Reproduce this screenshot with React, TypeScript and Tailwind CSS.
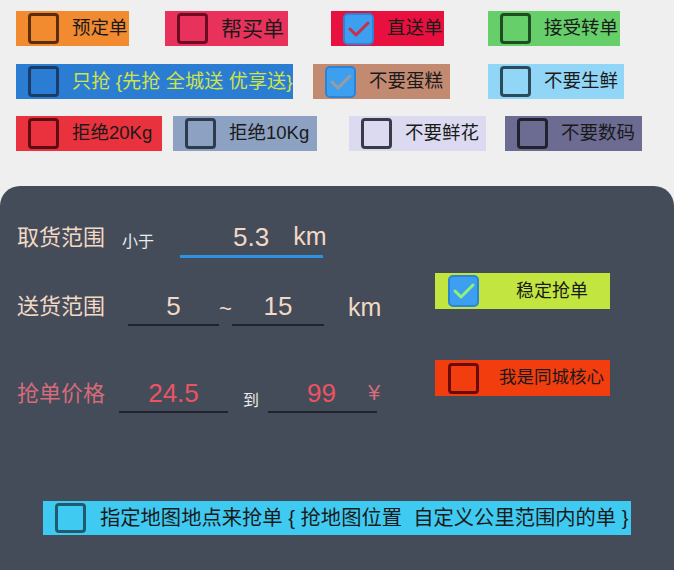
import React from "react";

const FONT = { fontFamily: '"Liberation Sans", "Noto Sans CJK SC", sans-serif' };

function Box({ cls }: { cls: string }) {
  return <div className={`w-[31px] h-[31px] shrink-0 rounded-[4px] border-[3.5px] ${cls}`} />;
}

function Checked({ stroke }: { stroke: string }) {
  return (
    <div className="w-[31px] h-[32px] shrink-0 rounded-[5px] border-2 border-[#2b84d4] bg-[#3c9ff0] flex items-center justify-center">
      <svg width="24" height="24" viewBox="0 0 24 24">
        <polyline points="3,12 9,18 21,6" fill="none" stroke={stroke} strokeWidth="3" strokeLinecap="round" strokeLinejoin="round" />
      </svg>
    </div>
  );
}

type Item = {
  label: string;
  bg: string;
  ml: string;
  w: string;
  box?: string;
  check?: string;
  text?: string;
};

function Tag({ it }: { it: Item }) {
  return (
    <div className={`h-[35px] flex items-center pl-[12px] shrink-0 ${it.bg} ${it.ml} ${it.w}`}>
      {it.check ? <Checked stroke={it.check} /> : <Box cls={it.box || ""} />}
      <span className={`ml-[13px] whitespace-nowrap leading-none ${it.text || "text-[18.5px] text-[#1a1a1a]"}`}>{it.label}</span>
    </div>
  );
}

const row1: Item[] = [
  { label: "预定单", bg: "bg-[#f28a30]", ml: "ml-[16px]", w: "w-[113px]", box: "border-[#5b2d0c]" },
  { label: "帮买单", bg: "bg-[#e8325c]", ml: "ml-[36px]", w: "w-[123px]", box: "border-[#6b0c23]", text: "text-[21px] text-[#1a1a1a]" },
  { label: "直送单", bg: "bg-[#e8103e]", ml: "ml-[43px]", w: "w-[113px]", check: "#c8304a" },
  { label: "接受转单", bg: "bg-[#66cf6a]", ml: "ml-[44px]", w: "w-[132px]", box: "border-[#1e4d22]" },
];
const row2: Item[] = [
  { label: "只抢 {先抢 全城送 优享送}", bg: "bg-[#2b7dd4]", ml: "ml-[16px]", w: "w-[277px]", box: "border-[#1b3c66]", text: "text-[19.2px] text-[#cde34a]" },
  { label: "不要蛋糕", bg: "bg-[#c38a72]", ml: "ml-[20px]", w: "w-[137px]", check: "#9c9c9c" },
  { label: "不要生鲜", bg: "bg-[#92d6f7]", ml: "ml-[38px]", w: "w-[136px]", box: "border-[#2a4b5c]" },
];
const row3: Item[] = [
  { label: "拒绝20Kg", bg: "bg-[#ea323e]", ml: "ml-[16px]", w: "w-[146px]", box: "border-[#5e0b12]" },
  { label: "拒绝10Kg", bg: "bg-[#8da2c2]", ml: "ml-[11px]", w: "w-[144px]", box: "border-[#2d3b4c]" },
  { label: "不要鲜花", bg: "bg-[#dcdaf0]", ml: "ml-[32px]", w: "w-[137px]", box: "border-[#3a3b48]" },
  { label: "不要数码", bg: "bg-[#6c6b91]", ml: "ml-[19px]", w: "w-[137px]", box: "border-[#22222f]" },
];

export default function App() {
  return (
    <div style={FONT} className="w-[674px] h-[570px] overflow-hidden bg-[#efefef] flex flex-col">
      <div className="pt-[11px] flex flex-col">
        <div className="flex">{row1.map((it) => <Tag key={it.label} it={it} />)}</div>
        <div className="flex mt-[18px]">{row2.map((it) => <Tag key={it.label} it={it} />)}</div>
        <div className="flex mt-[17px]">{row3.map((it) => <Tag key={it.label} it={it} />)}</div>
      </div>

      <div className="mt-[35px] flex-1 bg-[#444c5a] rounded-t-[20px] pt-[32px] flex flex-col">
        <div className="flex">
          <div className="w-[435px] pl-[17px] flex flex-col">
            {/* Row A */}
            <div className="h-[40px] flex items-center">
              <span className="text-[22px] text-[#f3d9c3] leading-none">取货范围</span>
              <span className="ml-[17px] mt-[8px] text-[16px] text-[#ececec] leading-none">小于</span>
              <div className="ml-[26px] w-[143px] h-[40px] border-b-[3px] border-[#2a93e4] flex items-center pl-[53px]">
                <span className="text-[26px] text-[#f3d9c3] leading-none">5.3</span>
                <span className="ml-[24px] text-[25px] text-[#f3d9c3] leading-none">km</span>
              </div>
            </div>
            {/* Row B */}
            <div className="mt-[30px] h-[38px] flex items-center">
              <span className="text-[22px] text-[#f3d9c3] leading-none">送货范围</span>
              <div className="ml-[23px] w-[91px] h-[38px] border-b-2 border-[#1f242c] flex items-center justify-center">
                <span className="text-[26px] text-[#f3d9c3] leading-none">5</span>
              </div>
              <span className="w-[13px] mt-[4px] text-center text-[22px] text-[#f3d9c3] leading-none">~</span>
              <div className="w-[92px] h-[38px] border-b-2 border-[#1f242c] flex items-center justify-center">
                <span className="text-[26px] text-[#f3d9c3] leading-none">15</span>
              </div>
              <span className="ml-[24px] text-[25px] text-[#f3d9c3] leading-none">km</span>
            </div>
            {/* Row C */}
            <div className="mt-[48px] h-[39px] flex items-center">
              <span className="text-[22px] text-[#d66b79] leading-none">抢单价格</span>
              <div className="ml-[14px] w-[109px] h-[39px] border-b-2 border-[#1f242c] flex items-center justify-center">
                <span className="text-[26px] text-[#ec5362] leading-none">24.5</span>
              </div>
              <span className="ml-[15px] mt-[14px] text-[16px] text-[#ececec] leading-none">到</span>
              <div className="ml-[9px] w-[109px] h-[39px] border-b-2 border-[#1f242c] flex items-center pl-[39px]">
                <span className="text-[26px] text-[#ec5362] leading-none">99</span>
                <span className="ml-[32px] text-[22px] text-[#d66b79] leading-none">¥</span>
              </div>
            </div>
          </div>

          <div className="w-[175px] flex flex-col">
            <div className="mt-[55px] h-[36px] bg-[#c2e63f] flex items-center pl-[13px]">
              <Checked stroke="#8ff07c" />
              <span className="ml-[37px] text-[18px] text-[#1a1a1a] leading-none">稳定抢单</span>
            </div>
            <div className="mt-[51px] h-[36px] bg-[#f23d0f] flex items-center pl-[13px]">
              <Box cls="border-[#6a0b0b]" />
              <span className="ml-[20px] text-[17.5px] text-[#1a1a1a] leading-none">我是同城核心</span>
            </div>
          </div>
        </div>

        <div className="mt-[88px] ml-[43px] w-[588px] h-[34px] bg-[#3fcaf2] flex items-center pl-[12px]">
          <div className="w-[31px] h-[30px] shrink-0 rounded-[4px] border-[3.5px] border-[#1f5a6e]" />
          <span className="ml-[14px] text-[20.3px] text-[#1a1a1a] leading-none whitespace-nowrap">
            指定地图地点来抢单 {"{"} 抢地图位置&nbsp;&nbsp;自定义公里范围内的单 {"}"}
          </span>
        </div>
      </div>
    </div>
  );
}
